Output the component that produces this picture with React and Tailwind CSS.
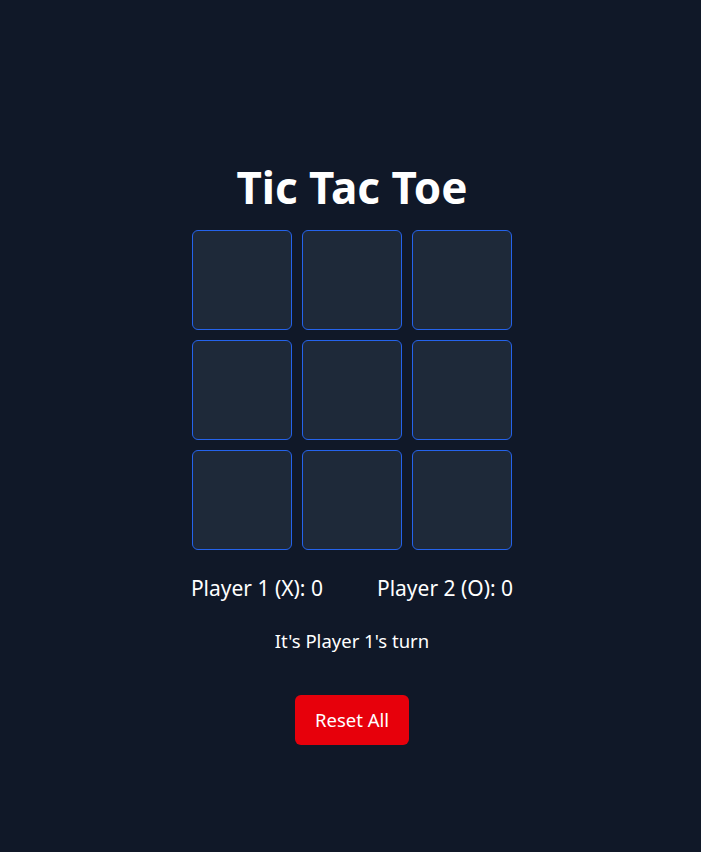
import React, { useState } from 'react'

function App() {
    const [board, setBoard] = useState(Array(9).fill(null));
    const [xTurn, setXTurn] = useState(true);
    const [scores] = useState({ x: 0, o: 0 });

    const handleClick = (i) => {
        if (board[i]) return;
        const next = [...board];
        next[i] = xTurn ? "X" : "O";
        setBoard(next);
        setXTurn(!xTurn);
    }

    const resetAll = () => {
        setBoard(Array(9).fill(null));
        setXTurn(true);
    }

    return (
        <div className="min-h-screen bg-[#101828] text-white font-['Noto_Sans',sans-serif] flex flex-col items-center pt-[163px] pl-[3px]">
            <h1 className="text-[44px] font-bold leading-[48px] mb-[19px]">Tic Tac Toe</h1>
            <div className="grid grid-cols-3 gap-[10px]">
                {board.map((cell, i) => (
                    <button
                        key={i}
                        onClick={() => handleClick(i)}
                        className="w-[100px] h-[100px] bg-[#1e2939] border border-[#2563eb] rounded-md text-5xl font-bold"
                    >
                        {cell}
                    </button>
                ))}
            </div>
            <div className="flex gap-[54px] mt-6 text-[21px] leading-7">
                <span>Player 1 (X): {scores.x}</span>
                <span>Player 2 (O): {scores.o}</span>
            </div>
            <p className="mt-[25px] text-[18.5px] leading-7">
                It's Player {xTurn ? 1 : 2}'s turn
            </p>
            <button
                onClick={resetAll}
                className="mt-10 h-[50px] px-5 bg-red-600 rounded-md text-[18.5px]"
            >
                Reset All
            </button>
        </div>
    );
}

export default App
